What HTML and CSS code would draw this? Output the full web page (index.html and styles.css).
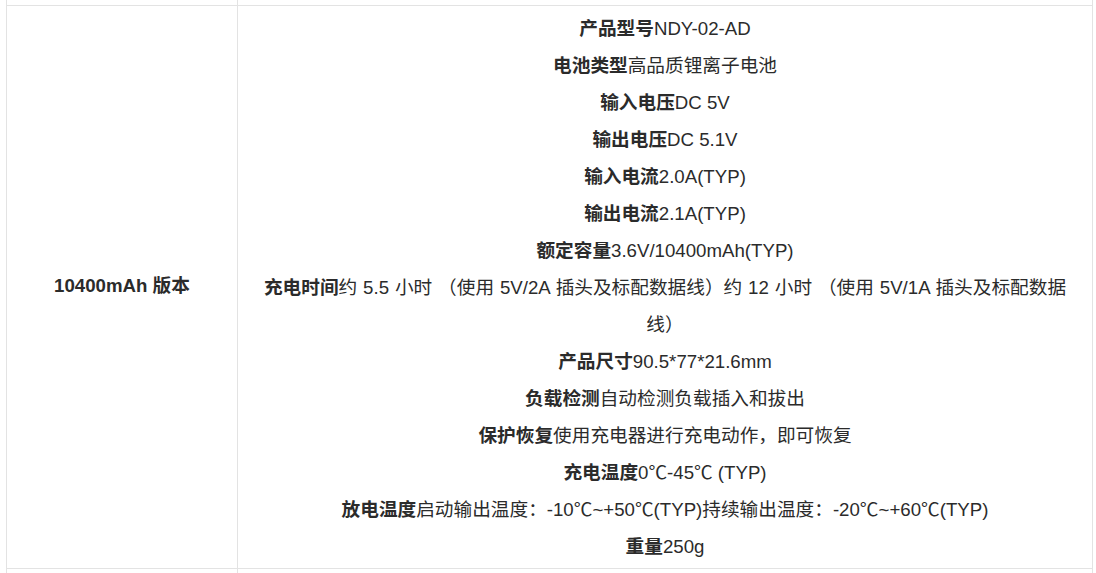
FILE: index.html
```html
<!DOCTYPE html>
<html lang="zh-CN">
<head>
<meta charset="utf-8">
<title>10400mAh 版本</title>
<link rel="stylesheet" href="styles.css">
</head>
<body>
<table class="spec">
  <tr class="spacer top"><td class="label-col"></td><td></td></tr>
  <tr>
    <td class="label-col label"><b>10400mAh 版本</b></td>
    <td class="details">
      <p><b>产品型号</b>NDY-02-AD</p>
      <p><b>电池类型</b>高品质锂离子电池</p>
      <p><b>输入电压</b>DC 5V</p>
      <p><b>输出电压</b>DC 5.1V</p>
      <p><b>输入电流</b>2.0A(TYP)</p>
      <p><b>输出电流</b>2.1A(TYP)</p>
      <p><b>额定容量</b>3.6V/10400mAh(TYP)</p>
      <p class="spaced"><b>充电时间</b>约 5.5 小时 （使用 5V/2A 插头及标配数据线）约 12 小时 （使用 5V/1A 插头及标配数据线）</p>
      <p><b>产品尺寸</b>90.5*77*21.6mm</p>
      <p><b>负载检测</b>自动检测负载插入和拔出</p>
      <p><b>保护恢复</b>使用充电器进行充电动作，即可恢复</p>
      <p><b>充电温度</b>0℃-45℃ (TYP)</p>
      <p><b>放电温度</b>启动输出温度：-10℃~+50℃(TYP)持续输出温度：-20℃~+60℃(TYP)</p>
      <p><b>重量</b>250g</p>
    </td>
  </tr>
  <tr class="spacer bottom"><td class="label-col"></td><td></td></tr>
</table>
</body>
</html>
```

FILE: styles.css
```css
html, body {
  margin: 0;
  padding: 0;
  background: #ffffff;
}

body {
  font-family: "Liberation Sans", "Noto Sans CJK SC", sans-serif;
  font-size: 18.67px;
  color: #2b2b2b;
  overflow: hidden;
}

.spec {
  border-collapse: collapse;
  margin-left: 6px;
  width: 1087px;
  table-layout: fixed;
}

.spec td {
  border: 1px solid #e3e3e3;
  padding: 0;
  text-align: center;
  vertical-align: middle;
}

.spec .label-col {
  width: 230px;
}

.spec .label {
  padding-bottom: 7px;
}

.spec .spacer td {
  height: 5px;
  padding: 0;
}

.spec .spacer.top td {
  border-top: none;
}

.spec .spacer.bottom td {
  border-bottom: none;
  height: 6px;
}

.spec .details {
  padding: 4px 20px 3px;
}

.details p {
  margin: 0;
  line-height: 37px;
}

.details .spaced {
  word-spacing: 0.7px;
}

.label b,
.details b {
  font-weight: bold;
}
```
